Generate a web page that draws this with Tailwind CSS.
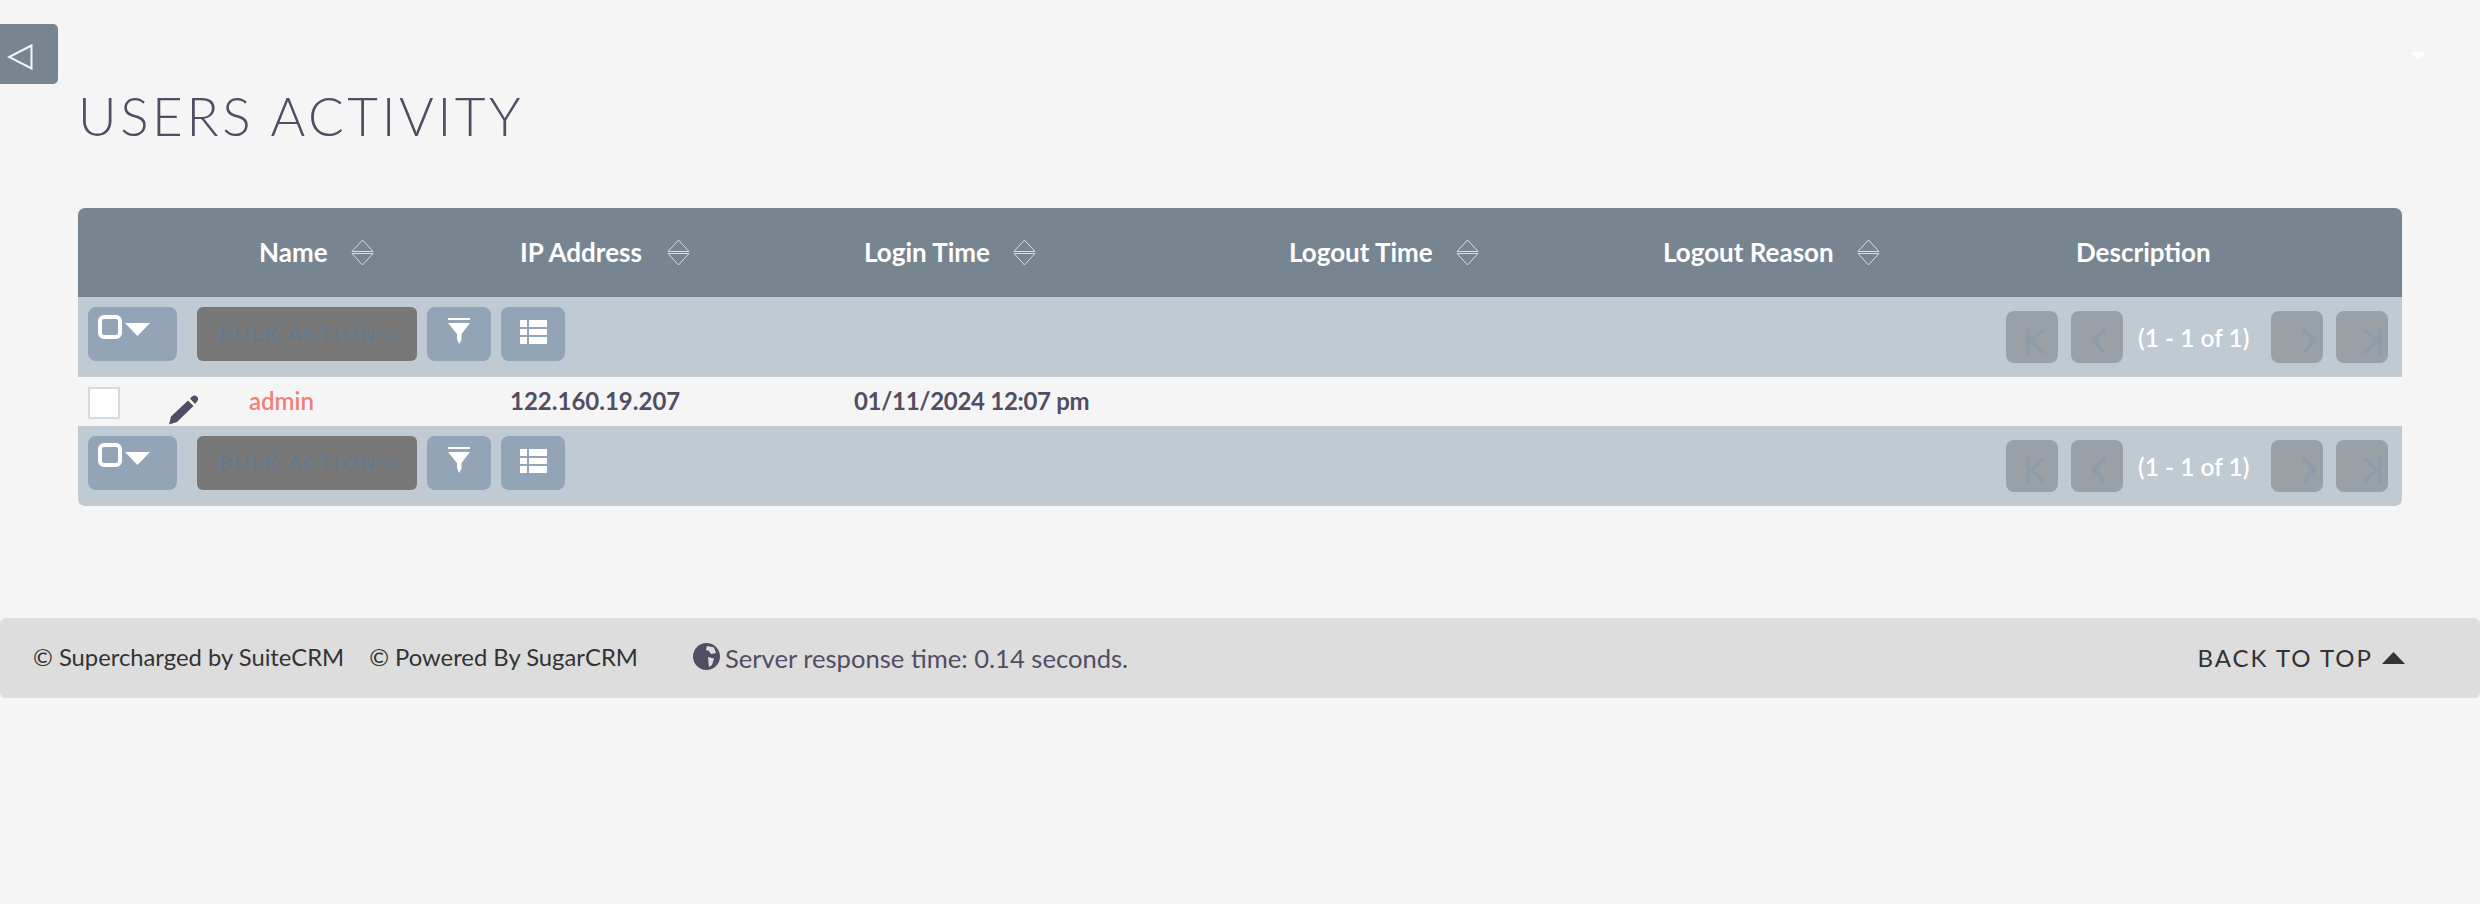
<!DOCTYPE html>
<html>
<head>
<meta charset="utf-8">
<script src="https://cdn.jsdelivr.net/npm/@tailwindcss/browser@4"></script>
</head>
<body class="bg-[#f5f5f5] font-['Lato',sans-serif] overflow-hidden">
<div class="relative h-[904px] w-[2480px]">
  <!-- sidebar toggle -->
  <div class="absolute left-0 top-[24px] flex h-[60px] w-[58px] items-start rounded-r-[5px] bg-[#778591] pl-[7px] pt-[20px]">
    <svg width="26" height="26" viewBox="0 0 26 26"><path d="M24.500 1.500 L2 13 L24.500 24.500 Z" fill="none" stroke="#f5f5f5" stroke-width="2"/></svg>
  </div>
  <!-- user menu caret -->
  <svg class="absolute left-[2410px] top-[52px]" width="16" height="8" viewBox="0 0 16 8"><path d="M0 0H16L8 8Z" fill="#ffffff"/></svg>

  <h1 class="absolute left-[78px] top-[86px] text-[53px] leading-[60px] font-light tracking-[3.600px] text-[#534d64]">USERS ACTIVITY</h1>

  <main class="pt-[208px] pl-[78px]">
    <div class="w-[2324px] overflow-hidden rounded-[7px]">
      <!-- header -->
      <div class="grid h-[89px] grid-cols-[171px_261px_344px_425px_374px_413px_336px] items-center bg-[#778591] text-[26px] font-bold text-white">
        <div></div>
        <div class="flex items-center gap-[23px] pl-[10px]"><span>Name</span>
          <svg width="23" height="27" viewBox="0 0 23 27" fill="none" stroke="#d5dbe0" stroke-width="1"><path d="M1 12.500L11.500 1L22 12.500ZM1 14.500L11.500 26L22 14.500Z"/></svg></div>
        <div class="flex items-center gap-[25px] pl-[10px]"><span>IP Address</span>
          <svg width="23" height="27" viewBox="0 0 23 27" fill="none" stroke="#d5dbe0" stroke-width="1"><path d="M1 12.500L11.500 1L22 12.500ZM1 14.500L11.500 26L22 14.500Z"/></svg></div>
        <div class="flex items-center gap-[23px] pl-[10px]"><span>Login Time</span>
          <svg width="23" height="27" viewBox="0 0 23 27" fill="none" stroke="#d5dbe0" stroke-width="1"><path d="M1 12.500L11.500 1L22 12.500ZM1 14.500L11.500 26L22 14.500Z"/></svg></div>
        <div class="flex items-center gap-[23px] pl-[10px]"><span>Logout Time</span>
          <svg width="23" height="27" viewBox="0 0 23 27" fill="none" stroke="#d5dbe0" stroke-width="1"><path d="M1 12.500L11.500 1L22 12.500ZM1 14.500L11.500 26L22 14.500Z"/></svg></div>
        <div class="flex items-center gap-[23px] pl-[10px]"><span>Logout Reason</span>
          <svg width="23" height="27" viewBox="0 0 23 27" fill="none" stroke="#d5dbe0" stroke-width="1"><path d="M1 12.500L11.500 1L22 12.500ZM1 14.500L11.500 26L22 14.500Z"/></svg></div>
        <div class="pl-[10px]">Description</div>
      </div>

      <!-- toolbar top -->
      <div class="flex h-[80px] items-start bg-[#bfcad3] pl-[10px] pr-[14px]">
        <div class="mt-[10px] flex h-[54px] w-[89px] shrink-0 items-start rounded-[8px] bg-[#92a4b5] pl-[10px] pt-[8px]">
          <span class="h-[24px] w-[24px] rounded-[6px] border-[4px] border-white"></span>
          <svg class="ml-[3px] mt-[8px]" width="25" height="13" viewBox="0 0 25 13"><path d="M0 0H25L12.500 13Z" fill="#fff"/></svg>
        </div>
        <div class="mt-[10px] ml-[20px] flex h-[54px] w-[220px] shrink-0 rounded-[6px] bg-[#787878] pl-[22px] pt-[13px]">
          <span class="text-[20px] leading-[26px] font-semibold tracking-[2.500px] text-[#627a90]">BULK ACTION</span>
          <svg class="ml-[2px] mt-[13px]" width="19" height="9" viewBox="0 0 19 9"><path d="M0 0H19L9.500 9Z" fill="#6c7a86"/></svg>
        </div>
        <div class="mt-[10px] ml-[10px] flex h-[54px] w-[64px] shrink-0 justify-center rounded-[8px] bg-[#92a4b5] pt-[11px]">
          <svg width="22" height="26" viewBox="0 0 22 26" fill="#fff"><path d="M0 0H22V2H0ZM0 5H22L13.500 16V22L11 26L9 21V16Z"/></svg>
        </div>
        <div class="mt-[10px] ml-[10px] flex h-[54px] w-[64px] shrink-0 justify-center rounded-[8px] bg-[#92a4b5] pt-[13px]">
          <svg width="27" height="24" viewBox="0 0 27 24" fill="#fff"><path d="M0 0H7V7H0ZM9 0H27V7H9ZM0 9H7V15H0ZM9 9H27V15H9ZM0 17H7V24H0ZM9 17H27V24H9Z"/></svg>
        </div>
        <div class="ml-auto mt-[14px] flex h-[52px] items-center">
          <div class="h-[52px] w-[52px] rounded-[8px] bg-[#9aa1a6] pl-[20px] pt-[17px]"><svg class="block" width="19" height="26" viewBox="0 0 19 26" fill="none" stroke="#8c9cab" stroke-width="4"><path d="M2 0V26M18 1L5 13L18 25"/></svg></div>
          <div class="ml-[13px] h-[52px] w-[52px] rounded-[8px] bg-[#9aa1a6] pl-[20px] pt-[17px]"><svg class="block" width="15" height="26" viewBox="0 0 15 26" fill="none" stroke="#8c9cab" stroke-width="4"><path d="M14 1L2.500 13L14 25"/></svg></div>
          <span class="ml-[15px] mt-[2px] w-[112px] whitespace-nowrap text-[24.500px] font-semibold text-white">(1 - 1 of 1)</span>
          <div class="ml-[21px] h-[52px] w-[52px] rounded-[8px] bg-[#9aa1a6] pl-[31px] pt-[17px]"><svg class="block" width="15" height="26" viewBox="0 0 15 26" fill="none" stroke="#8c9cab" stroke-width="4"><path d="M1 1L12.500 13L1 25"/></svg></div>
          <div class="ml-[13px] h-[52px] w-[52px] rounded-[8px] bg-[#9aa1a6] pl-[27px] pt-[17px]"><svg class="block" width="19" height="26" viewBox="0 0 19 26" fill="none" stroke="#8c9cab" stroke-width="4"><path d="M1 1L14 13L1 25M17 0V26"/></svg></div>
        </div>
      </div>

      <!-- row -->
      <div class="grid h-[49px] grid-cols-[171px_261px_344px_425px_374px_413px_336px] items-center pb-[2px] text-[24px] font-bold text-[#534d64]">
        <div class="relative h-full">
          <span class="absolute left-[10px] top-[10px] h-[32px] w-[32px] border-2 border-[#d3dbe3] bg-white"></span>
          <svg class="absolute left-[91px] top-[18px]" width="30" height="30" viewBox="0 0 30 30" fill="#534d64"><path d="M2 21.500L19 5.500L24.500 11L8 27L0 29.500ZM21 3.500L23 1.500C24.500 0 26.500 0 28 1.500C29.500 3 29.500 5 28 6.500L26 9Z"/></svg>
        </div>
        <div class="font-semibold text-[#f08079]">admin</div>
        <div>122.160.19.207</div>
        <div class="tracking-[-0.3px]">01/11/2024 12:07 pm</div>
        <div></div><div></div><div></div>
      </div>

      <!-- toolbar bottom -->
      <div class="flex h-[80px] items-start bg-[#bfcad3] pl-[10px] pr-[14px]">
        <div class="mt-[10px] flex h-[54px] w-[89px] shrink-0 items-start rounded-[8px] bg-[#92a4b5] pl-[10px] pt-[7px]">
          <span class="h-[24px] w-[24px] rounded-[6px] border-[4px] border-white"></span>
          <svg class="ml-[3px] mt-[9px]" width="25" height="13" viewBox="0 0 25 13"><path d="M0 0H25L12.500 13Z" fill="#fff"/></svg>
        </div>
        <div class="mt-[10px] ml-[20px] flex h-[54px] w-[220px] shrink-0 rounded-[6px] bg-[#787878] pl-[22px] pt-[13px]">
          <span class="text-[20px] leading-[26px] font-semibold tracking-[2.500px] text-[#627a90]">BULK ACTION</span>
          <svg class="ml-[2px] mt-[13px]" width="19" height="9" viewBox="0 0 19 9"><path d="M0 0H19L9.500 9Z" fill="#6c7a86"/></svg>
        </div>
        <div class="mt-[10px] ml-[10px] flex h-[54px] w-[64px] shrink-0 justify-center rounded-[8px] bg-[#92a4b5] pt-[11px]">
          <svg width="22" height="26" viewBox="0 0 22 26" fill="#fff"><path d="M0 0H22V2H0ZM0 5H22L13.500 16V22L11 26L9 21V16Z"/></svg>
        </div>
        <div class="mt-[10px] ml-[10px] flex h-[54px] w-[64px] shrink-0 justify-center rounded-[8px] bg-[#92a4b5] pt-[13px]">
          <svg width="27" height="24" viewBox="0 0 27 24" fill="#fff"><path d="M0 0H7V7H0ZM9 0H27V7H9ZM0 9H7V15H0ZM9 9H27V15H9ZM0 17H7V24H0ZM9 17H27V24H9Z"/></svg>
        </div>
        <div class="ml-auto mt-[14px] flex h-[52px] items-center">
          <div class="h-[52px] w-[52px] rounded-[8px] bg-[#9aa1a6] pl-[20px] pt-[17px]"><svg class="block" width="19" height="26" viewBox="0 0 19 26" fill="none" stroke="#8c9cab" stroke-width="4"><path d="M2 0V26M18 1L5 13L18 25"/></svg></div>
          <div class="ml-[13px] h-[52px] w-[52px] rounded-[8px] bg-[#9aa1a6] pl-[20px] pt-[17px]"><svg class="block" width="15" height="26" viewBox="0 0 15 26" fill="none" stroke="#8c9cab" stroke-width="4"><path d="M14 1L2.500 13L14 25"/></svg></div>
          <span class="ml-[15px] mt-[2px] w-[112px] whitespace-nowrap text-[24.500px] font-semibold text-white">(1 - 1 of 1)</span>
          <div class="ml-[21px] h-[52px] w-[52px] rounded-[8px] bg-[#9aa1a6] pl-[31px] pt-[17px]"><svg class="block" width="15" height="26" viewBox="0 0 15 26" fill="none" stroke="#8c9cab" stroke-width="4"><path d="M1 1L12.500 13L1 25"/></svg></div>
          <div class="ml-[13px] h-[52px] w-[52px] rounded-[8px] bg-[#9aa1a6] pl-[27px] pt-[17px]"><svg class="block" width="19" height="26" viewBox="0 0 19 26" fill="none" stroke="#8c9cab" stroke-width="4"><path d="M1 1L14 13L1 25M17 0V26"/></svg></div>
        </div>
      </div>
    </div>
  </main>

  <footer class="mt-[112px] flex h-[80px] w-[2480px] items-center rounded-[6px] bg-[#dddddd] pl-[33px] pr-[75px] text-[23.800px] text-[#333333]">
    <span>© Supercharged by SuiteCRM</span>
    <span class="ml-[25px]">© Powered By SugarCRM</span>
    <span class="ml-[55px] flex items-center text-[25.600px] text-[#534d64]">
      <svg class="mr-[5px] mb-[3px]" width="27" height="27" viewBox="0 0 27 27"><circle cx="13.500" cy="13.500" r="13.500" fill="#534d64"/><path d="M14 3L21 4.500L23 10L18 11L16 8L13 7ZM15 14L21 15.500L19 22L16 24Z" fill="#dddddd"/></svg>
      Server response time: 0.14 seconds.
    </span>
    <span class="ml-auto flex items-center text-[24px] tracking-[2px]">BACK TO TOP
      <svg class="ml-[9px]" width="23" height="12" viewBox="0 0 23 12"><path d="M0 12H23L11.500 0Z" fill="#333333"/></svg>
    </span>
  </footer>
</div>
</body>
</html>
